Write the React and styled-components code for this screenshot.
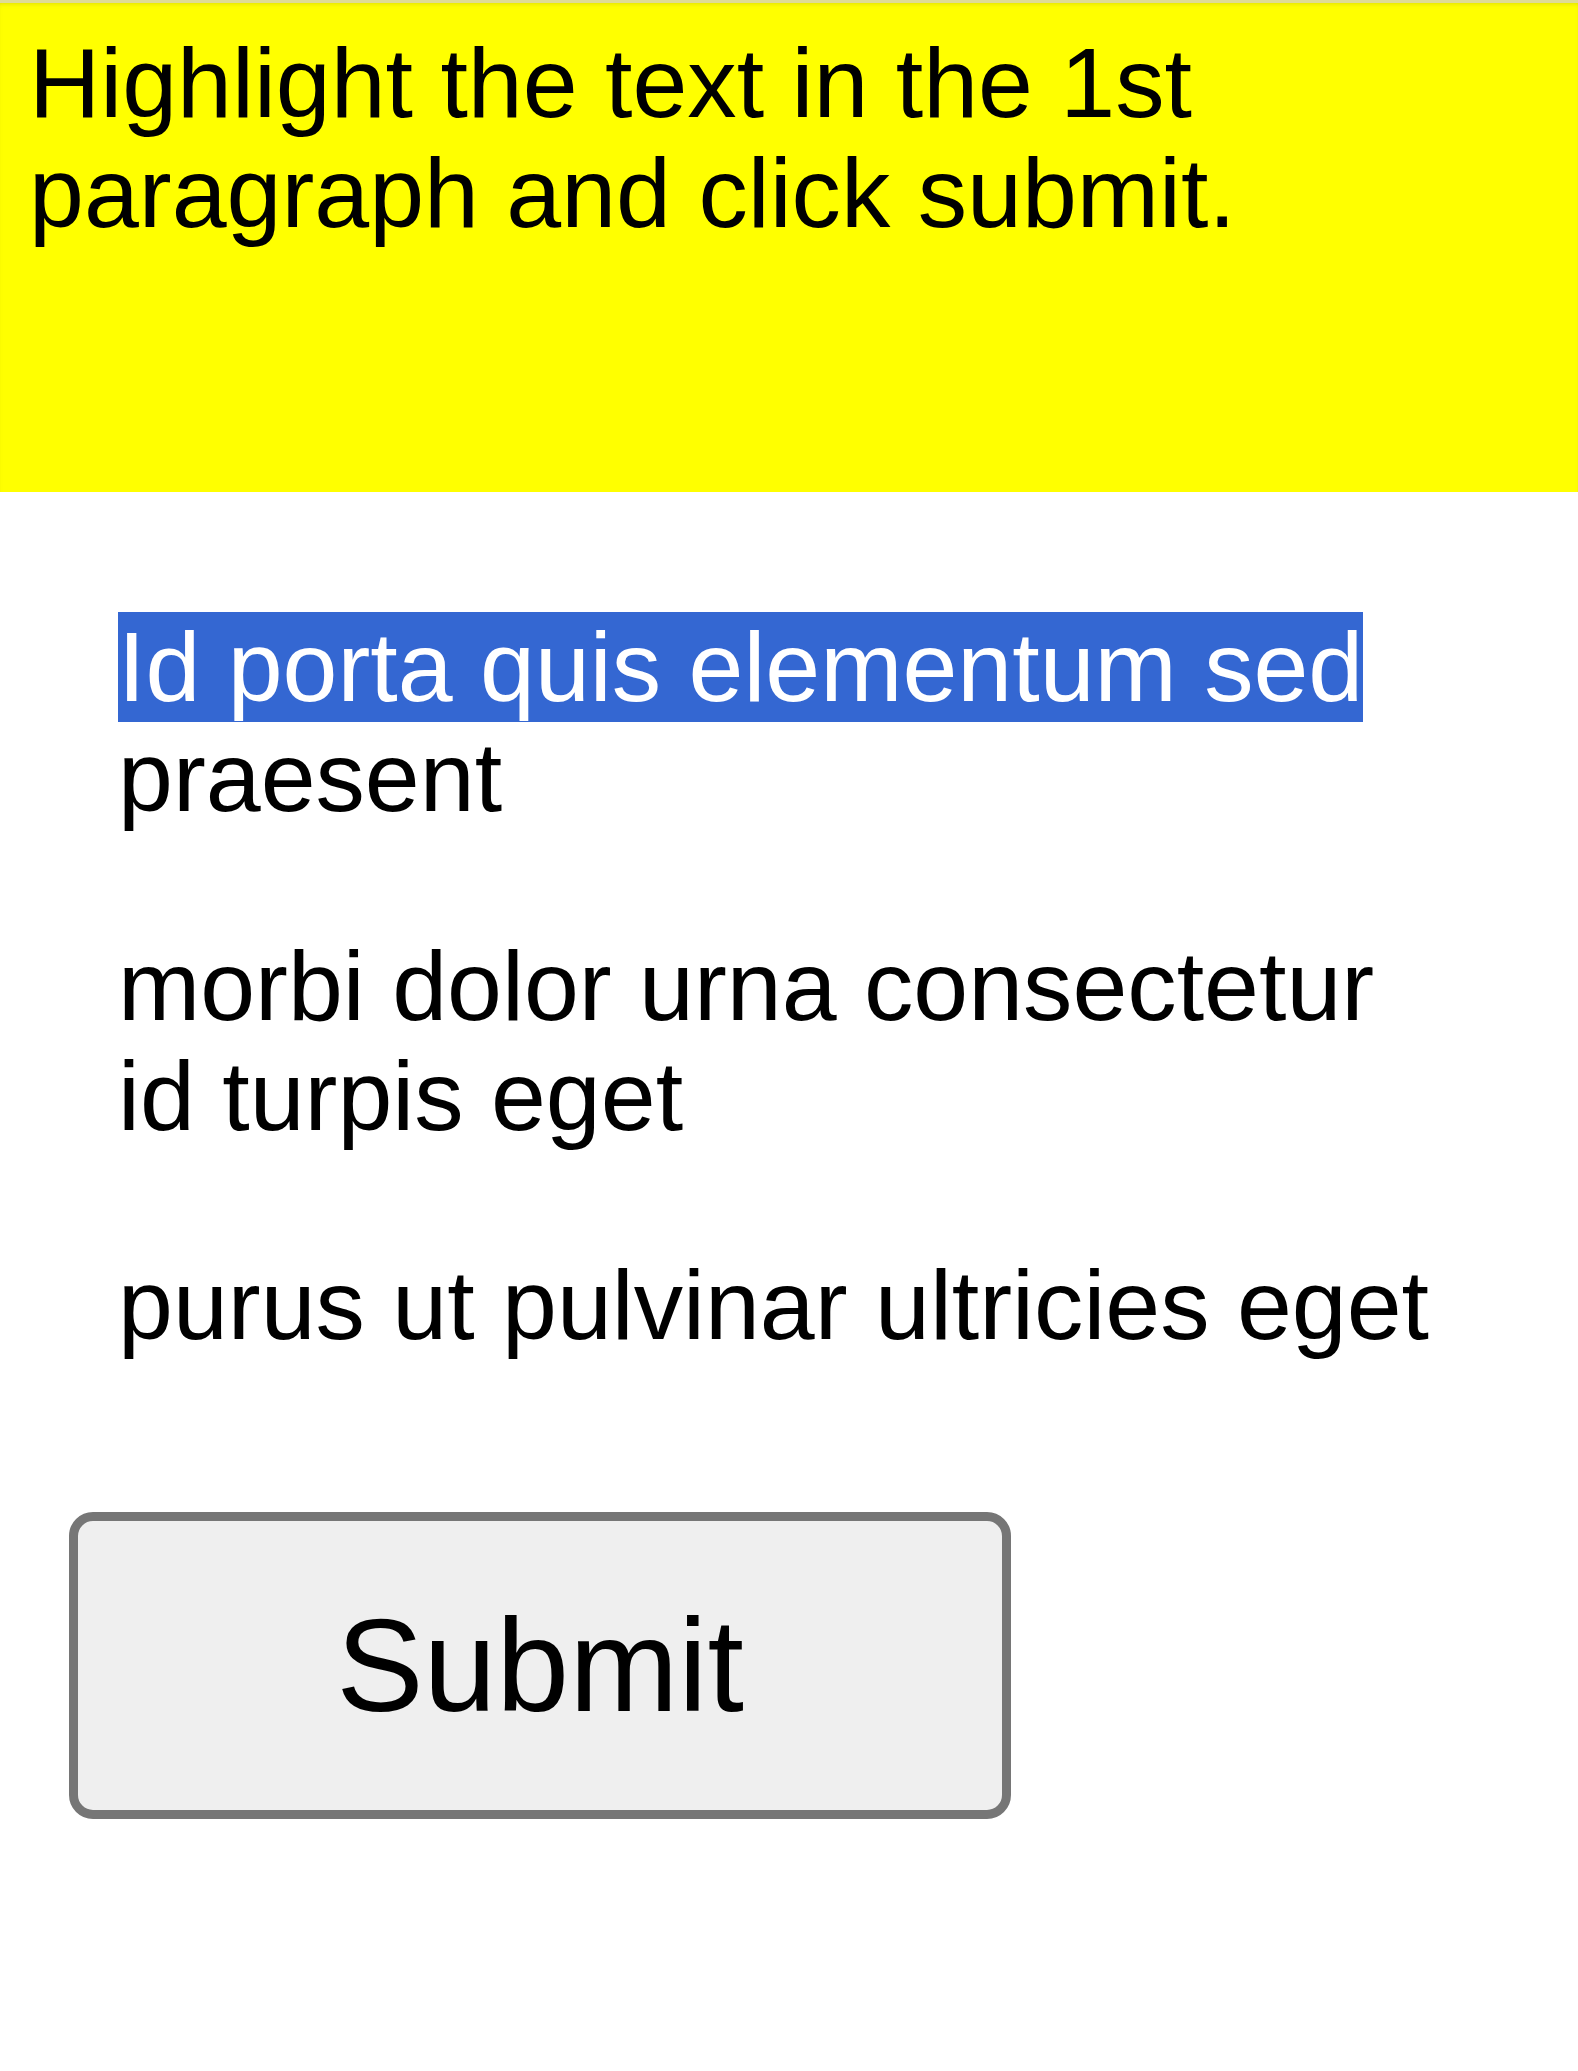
import React from 'react';
import styled, { createGlobalStyle } from 'styled-components';

const GlobalStyle = createGlobalStyle`
  html, body {
    margin: 0;
    padding: 0;
    background: #ffffff;
  }
  body {
    font-family: "Liberation Sans", Arial, sans-serif;
    color: #000;
  }
`;

const Page = styled.div`
  display: flex;
  flex-direction: column;
  width: 1578px;
  min-height: 2071px;
`;

const Banner = styled.div`
  height: 492px;
  box-sizing: border-box;
  padding: 28px 29px 0;
  background: #ffff00;
  box-shadow: inset 0 3px 0 #dedb95, inset 0 6px 4px -2px rgba(170, 170, 0, 0.35);
`;

const Prompt = styled.h1`
  margin: 0;
  font-size: 98.7px;
  font-weight: normal;
  line-height: 110px;
`;

const Passage = styled.div`
  padding: 120px 120px 0 118px;

  p {
    margin: 0 0 99px;
    font-size: 98.7px;
    line-height: 110px;
  }
  p:last-child {
    margin-bottom: 0;
  }
`;

const Selected = styled.span`
  background: #3467d2;
  color: #fff;
`;

const Actions = styled.div`
  display: flex;
  padding: 152px 0 0 69px;
`;

const SubmitButton = styled.button`
  display: flex;
  align-items: center;
  justify-content: center;
  width: 942px;
  height: 307px;
  box-sizing: border-box;
  padding: 0;
  border: 9px solid #767676;
  border-radius: 24px;
  background: #efefef;
  color: #000;
  font-family: "Liberation Sans", Arial, sans-serif;
  font-size: 131px;
  line-height: 1;
`;

const App = () => {
  return (
    <Page>
      <GlobalStyle />
      <Banner>
        <Prompt>Highlight the text in the 1st paragraph and click submit.</Prompt>
      </Banner>
      <Passage>
        <p><Selected>Id porta quis elementum sed</Selected> praesent</p>
        <p>morbi dolor urna consectetur id turpis eget</p>
        <p>purus ut pulvinar ultricies eget</p>
      </Passage>
      <Actions>
        <SubmitButton type="button">Submit</SubmitButton>
      </Actions>
    </Page>
  );
};

export default App;
